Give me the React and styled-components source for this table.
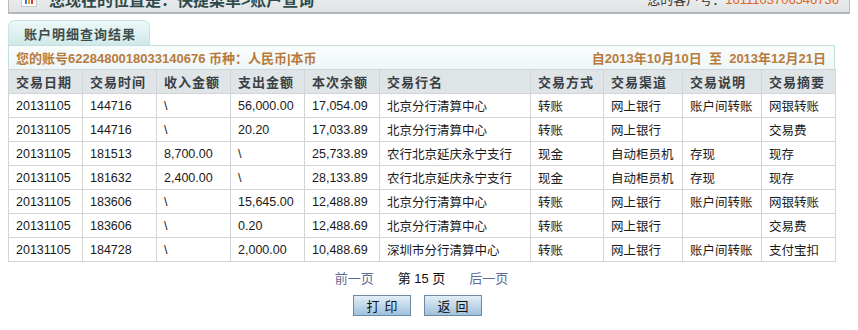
import React from "react";
import styled, { createGlobalStyle } from "styled-components";

const GlobalStyle = createGlobalStyle`
  html, body {
    margin: 0;
    padding: 0;
    background: #fff;
  }
  body {
    font-family: "Liberation Sans", Arial, "Noto Sans CJK SC", sans-serif;
    font-size: 12px;
    color: #222;
  }
`;

const Page = styled.div`
  width: 858px;
  height: 330px;
  overflow: hidden;
  padding: 0 8px;
  box-sizing: border-box;
`;

// location bar, scrolled half out of view
const TopBar = styled.div`
  margin-top: -15px;
  width: 842px;
  height: 29px;
  box-sizing: border-box;
  border: 1px solid #b9bcbe;
  border-top: none;
  border-bottom: 2px solid #b4b7b9;
  background: linear-gradient(#f6f7f7, #dfe2e3);
  display: flex;
  align-items: center;
  padding: 0 10px 0 12px;
`;

const BarIcon = styled.div`
  width: 16px;
  height: 15px;
  background: #fff;
  border: 1px solid #c5c8ca;
  box-sizing: border-box;
  display: flex;
  align-items: flex-end;
  justify-content: center;
  gap: 1px;
  padding-bottom: 2px;
  margin-top: 2px;
`;

const Bar = styled.span`
  width: 2px;
  height: ${(p) => p.h}px;
  background: ${(p) => p.c};
`;

const Location = styled.div`
  margin-left: 12px;
  font-size: 16px;
  font-weight: bold;
  color: #2f4a4a;
  flex: 1;
`;

const CustNo = styled.div`
  font-size: 13px;
  color: #333;
  b {
    font-weight: normal;
    color: #e0641c;
  }
`;

const Tab = styled.div`
  margin-top: 6px;
  width: 142px;
  height: 25px;
  box-sizing: border-box;
  border: 1px solid #c7e3e3;
  border-bottom: none;
  border-radius: 7px 7px 0 0;
  background: linear-gradient(#eef8f8, #cfe9e8);
  display: flex;
  align-items: center;
  padding-left: 15px;
  font-size: 13px;
  font-weight: bold;
  letter-spacing: 1px;
  color: #3d4d4d;
`;

const Panel = styled.div`
  width: 827px;
`;

const InfoRow = styled.div`
  height: 24px;
  box-sizing: border-box;
  border: 1px solid #c3e0e0;
  border-bottom: none;
  background: linear-gradient(#fbfdfd, #eef6f6);
  display: flex;
  align-items: center;
  justify-content: space-between;
  padding: 0 8px 0 7px;
  font-size: 13px;
  font-weight: bold;
  color: #b87a3c;
`;

const Table = styled.table`
  width: 827px;
  border-collapse: collapse;
  table-layout: fixed;
  th, td {
    border: 1px solid #d2d5d8;
    height: 23px;
    padding: 0 0 0 7px;
    text-align: left;
    white-space: nowrap;
    overflow: hidden;
  }
  th {
    background: #dfe4e7;
    font-size: 13px;
    font-weight: bold;
    letter-spacing: 1px;
    color: #3a3f44;
  }
  td {
    font-size: 12.5px;
    color: #1a1a1a;
  }
`;

const Pager = styled.div`
  width: 827px;
  display: flex;
  justify-content: center;
  gap: 24px;
  margin-top: 6px;
  font-size: 13px;
`;

const PageLink = styled.span`
  color: ${(p) => (p.$current ? "#111" : "#5b6a96")};
`;

const Buttons = styled.div`
  width: 827px;
  display: flex;
  justify-content: center;
  gap: 13px;
  margin-top: 8px;
  padding-right: 8px;
  box-sizing: border-box;
`;

const Button = styled.button`
  width: 58px;
  height: 21px;
  border: 1px solid #6e8aa2;
  background: linear-gradient(#e2eef7, #9fc1dc);
  font-family: "Liberation Sans", "Noto Sans CJK SC", sans-serif;
  font-size: 13px;
  letter-spacing: 5px;
  padding: 0 0 0 5px;
  color: #111;
`;

const columns = [
  ["交易日期", 74],
  ["交易时间", 74],
  ["收入金额", 74],
  ["支出金额", 74],
  ["本次余额", 75],
  ["交易行名", 151],
  ["交易方式", 73],
  ["交易渠道", 79],
  ["交易说明", 79],
  ["交易摘要", 74],
];

const rows = [
  ["20131105", "144716", "\\", "56,000.00", "17,054.09", "北京分行清算中心", "转账", "网上银行", "账户间转账", "网银转账"],
  ["20131105", "144716", "\\", "20.20", "17,033.89", "北京分行清算中心", "转账", "网上银行", "", "交易费"],
  ["20131105", "181513", "8,700.00", "\\", "25,733.89", "农行北京延庆永宁支行", "现金", "自动柜员机", "存现", "现存"],
  ["20131105", "181632", "2,400.00", "\\", "28,133.89", "农行北京延庆永宁支行", "现金", "自动柜员机", "存现", "现存"],
  ["20131105", "183606", "\\", "15,645.00", "12,488.89", "北京分行清算中心", "转账", "网上银行", "账户间转账", "网银转账"],
  ["20131105", "183606", "\\", "0.20", "12,488.69", "北京分行清算中心", "转账", "网上银行", "", "交易费"],
  ["20131105", "184728", "\\", "2,000.00", "10,488.69", "深圳市分行清算中心", "转账", "网上银行", "账户间转账", "支付宝扣"],
];

export default function App() {
  return (
    <>
      <GlobalStyle />
      <Page>
        <TopBar>
          <BarIcon>
            <Bar h={4} c="#3a7bd5" />
            <Bar h={7} c="#f0a020" />
            <Bar h={5} c="#d83a2a" />
          </BarIcon>
          <Location>您现在的位置是：快捷菜单&gt;账户查询</Location>
          <CustNo>
            您的客户号：<b>1611103706546736</b>
          </CustNo>
        </TopBar>
        <Tab>账户明细查询结果</Tab>
        <Panel>
          <InfoRow>
            <span>您的账号6228480018033140676 币种：人民币|本币</span>
            <span>自2013年10月10日&nbsp; 至&nbsp; 2013年12月21日</span>
          </InfoRow>
          <Table>
            <colgroup>
              {columns.map(([name, w]) => (
                <col key={name} style={{ width: w }} />
              ))}
            </colgroup>
            <thead>
              <tr>
                {columns.map(([name]) => (
                  <th key={name}>{name}</th>
                ))}
              </tr>
            </thead>
            <tbody>
              {rows.map((r, i) => (
                <tr key={i}>
                  {r.map((c, j) => (
                    <td key={j}>{c}</td>
                  ))}
                </tr>
              ))}
            </tbody>
          </Table>
        </Panel>
        <Pager>
          <PageLink>前一页</PageLink>
          <PageLink $current>第 15 页</PageLink>
          <PageLink>后一页</PageLink>
        </Pager>
        <Buttons>
          <Button>打印</Button>
          <Button>返回</Button>
        </Buttons>
      </Page>
    </>
  );
}
